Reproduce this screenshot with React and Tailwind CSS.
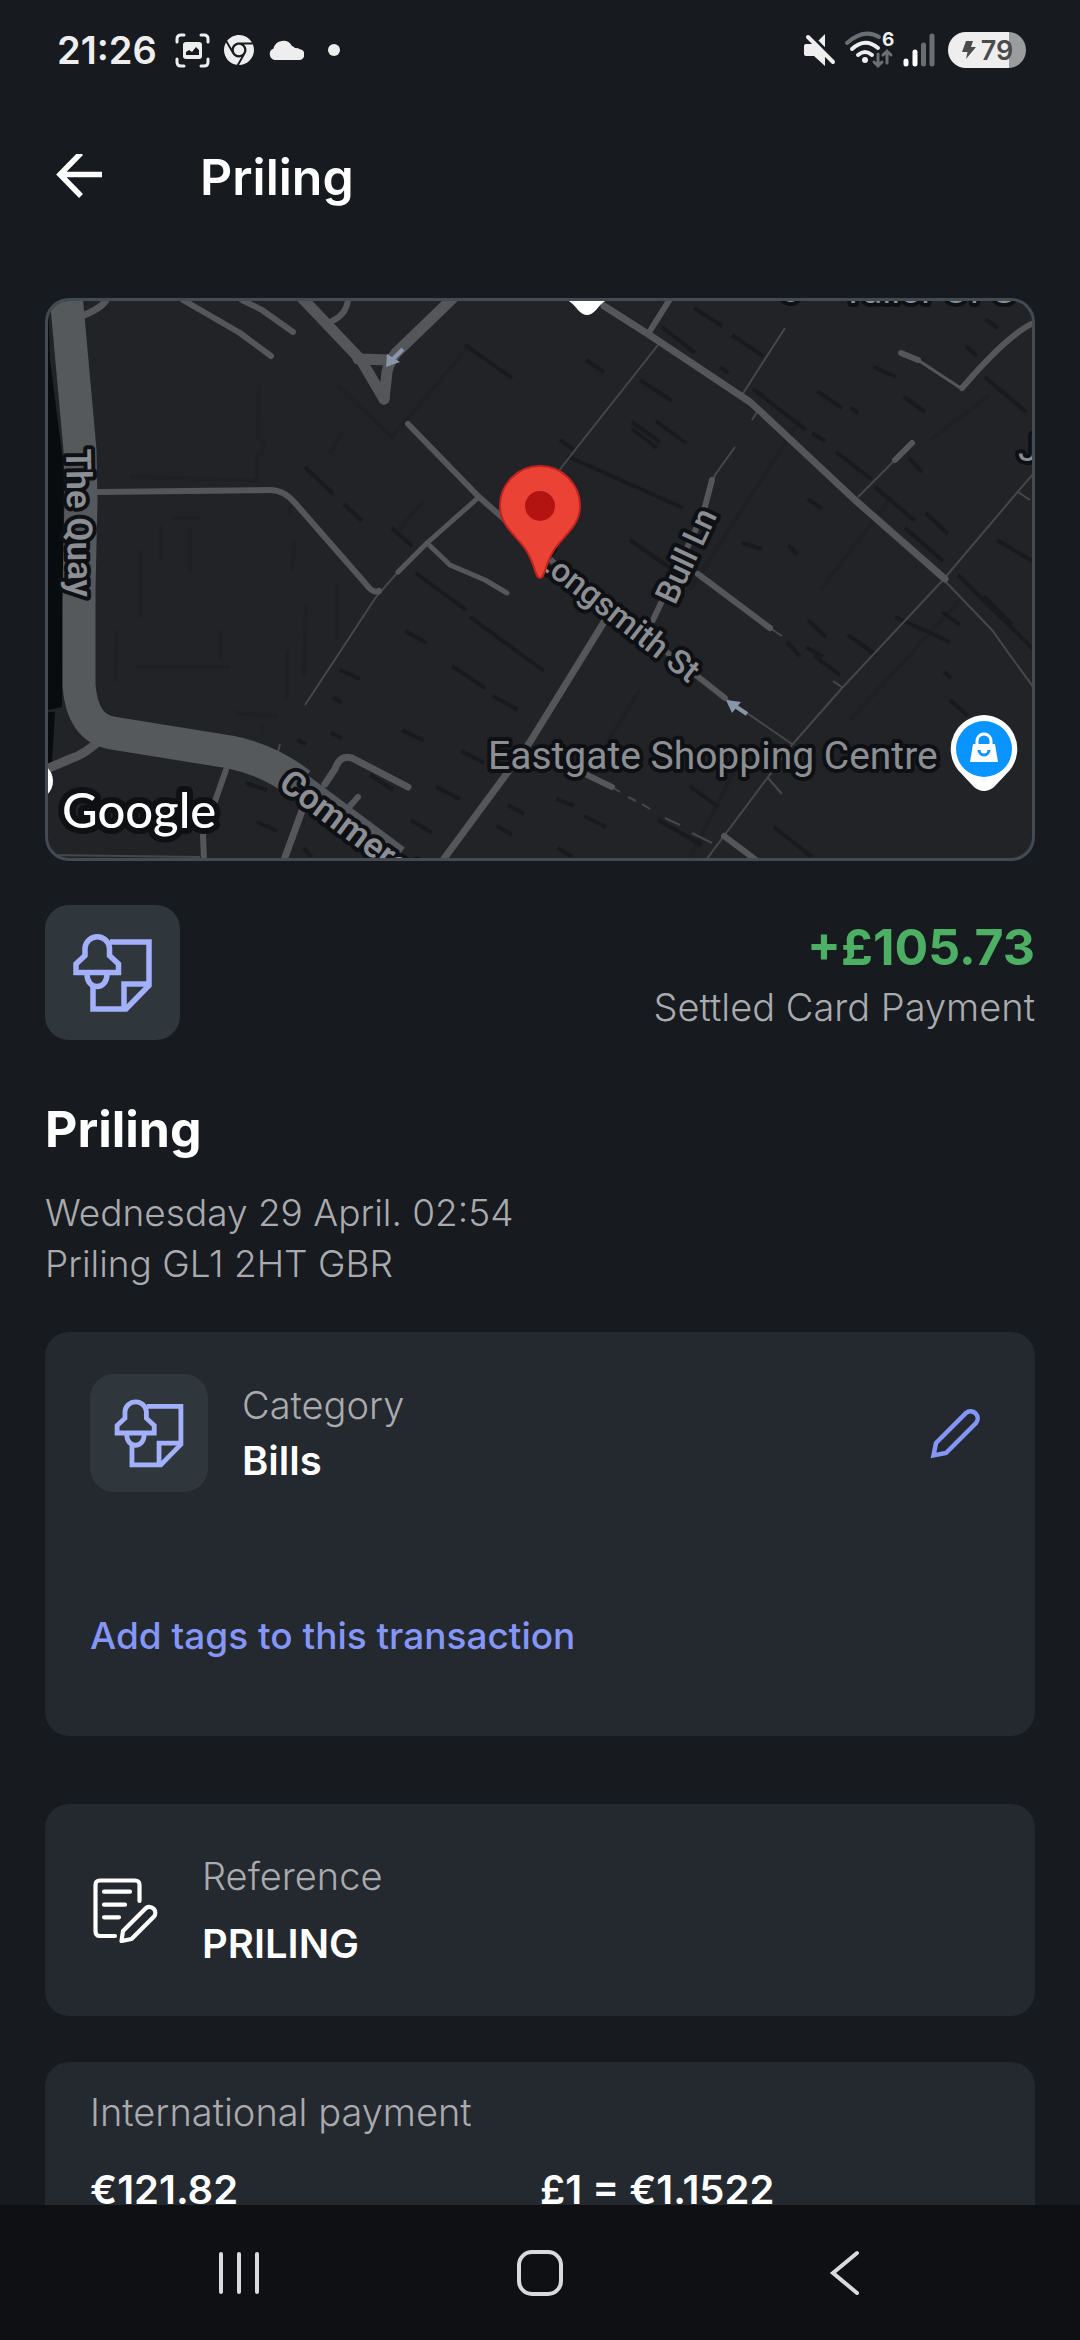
import React from 'react';
import { FaChrome } from 'react-icons/fa6';

const roads = [
  { d: 'M82 316Q102 308 106 300', w: 7 },
  { d: 'M183 300L240 333L271 356', w: 6 },
  { d: 'M242 300L262 310L293 332', w: 6 },
  { d: 'M302 298L361 360L384 399', w: 11 },
  { d: 'M384 399L387 372Q389 362 396 353L455 296', w: 11 },
  { d: 'M358 359L390 360', w: 11 },
  { d: 'M332 321Q346 315 348 300', w: 6 },
  { d: 'M98 492L270 490Q284 490 295 503L365 583Q373 594 379 591', w: 6 },
  { d: 'M408 424L479 497L560 568L725 698', w: 6 },
  { d: 'M479 497L427 543L398 572', w: 5 },
  { d: 'M427 543L450 565L485 580L507 593', w: 5 },
  { d: 'M604 306L648 334L750 402L760 411L855 500L945 579', w: 7 },
  { d: 'M648 334L670 299', w: 6 },
  { d: 'M712 480L703 514L653 620', w: 6 },
  { d: 'M604 622L530 742L443 860', w: 7 },
  { d: 'M901 353L918 360', w: 6 },
  { d: 'M918 360L962 389', w: 3 },
  { d: 'M962 388Q1010 332 1036 322', w: 6 },
  { d: 'M895 460L912 443', w: 6 },
  { d: 'M698 574L770 628', w: 6 },
  { d: 'M585 774L612 787', w: 6 },
  { d: 'M724 836L756 860', w: 6 },
  { d: 'M226 770L203 835L204 860', w: 6 },
  { d: 'M303 808L284 860', w: 7 },
  { d: 'M325 784L335 769Q340 754 352 758L408 787', w: 7 },
  { d: 'M350 806L358 797', w: 6 },
  { d: 'M44 770L70 759Q84 755 100 740', w: 9 },
];

const lanes =
  'M398 572L376 597L305 705M658 345L575 450L558 472M785 328L742 395M757 412L752 420M735 447L715 475L712 482' +
  'M858 497L895 460M1034 473L1015 495L943 580L842 688L792 745L706 860M1018 492L1030 500M944 580L992 630L1012 658L1034 688' +
  'M725 698L792 744M843 688L833 681M770 628L782 636M612 787L620 792M628 797L636 801M642 804L650 809M665 818L680 825M692 833L712 843' +
  'M768 778L782 794M278 752L280 744M48 855L200 857';

// building outlines, barely lighter or darker than the ground
const shadows =
  'M465 345L512 378M305 467L333 494M344 504L362 521M392 528L412 546M567 456L683 508M632 422L660 442M586 360L604 372M694 308L722 326' +
  'M640 380L672 401M656 421L686 443M632 429L657 448M662 327L695 353M732 335L763 356M753 389L806 430M812 433L825 441' +
  'M720 367L728 373M836 452L871 479M875 487L915 521M905 528L943 561M874 367L896 377M904 397L925 412M966 346L977 356M985 319L998 328' +
  'M926 513L948 534M851 408L858 413M817 391L842 408M909 458L922 472M808 499L822 509M985 377L1026 412M997 540L1034 562M895 617L950 642' +
  'M958 575L1034 650M984 596L1012 625M942 612L960 625M808 620L826 637M814 656L840 675M787 642L800 656M742 543L762 549M630 540L690 582' +
  'M806 647L823 657M788 545L797 554M560 440L574 450M416 573L466 610M470 617L544 671M452 666L485 688M493 696L518 710M405 631L427 643' +
  'M340 670L360 679M333 697L342 703M297 740L306 744M331 733L342 738M402 730L424 741M461 751L484 763M246 783L267 790M257 822L277 831' +
  'M436 787L460 799M411 820L432 833M370 775L393 790M508 805L524 814M497 826L512 835M556 799L574 806M584 816L606 827M658 820L702 845' +
  'M558 848L572 857M690 786L718 807M774 827L812 857M848 635L876 655M950 700L968 716M944 672L951 678M303 848L312 857';

const blocks =
  'M259 385L258 438L264 443L262 453L257 455V480L130 477M161 526V560M190 528V574M141 550V618M117 630L115 682M221 630V660M295 540L292 570' +
  'M306 605L304 676M337 585V640M136 667H230M234 713L278 716M262 725V735M330 454L342 432M470 345L392 437L337 385' +
  'M424 500L399 530M287 650V700M172 518H200M290 516V505M890 500L820 590M740 760L690 858M800 420L690 590M640 690L590 770M960 600L850 720M990 395L930 440';

const MapLabel = ({ x, y, size, angle = 0, weight = 500, children }) => (
  <text
    x={x}
    y={y}
    transform={`rotate(${angle} ${x} ${y})`}
    fontSize={size}
    fontWeight={weight}
    fill="#8b8e93"
    stroke="#0e1013"
    strokeWidth="8"
    strokeLinejoin="round"
    paintOrder="stroke"
  >
    {children}
  </text>
);

const TransactionMap = () => (
  <div className="overflow-hidden rounded-3xl border-3 border-[#434a54] bg-[#222327]">
    <svg
      viewBox="48 301 984 557"
      className="block w-full"
      style={{ fontFamily: 'Roboto, sans-serif' }}
      role="img"
      aria-label="Map of the merchant location"
    >
      <path d="M48 301L50 360L64 470L62 707L48 710ZM48 712H55L52 762L48 764Z" fill="#090c0f" />
      <g fill="none">
        <path d={blocks} stroke="#1e2023" strokeWidth="4" />
        <path d={shadows} stroke="#191a1d" strokeWidth="4" />
        <path d={lanes} stroke="#45474b" strokeWidth="2" />
        <g strokeLinecap="round" strokeLinejoin="round" stroke="#545659">
          {roads.map((road) => (
            <path key={road.d} d={road.d} strokeWidth={road.w} />
          ))}
        </g>
        <path d="M290 772L400 854" stroke="#545659" strokeWidth="16" />
        <path
          d="M66 295L80 450L81 500L79 590V685Q82 728 112 733L230 752Q270 760 300 784"
          stroke="#56595b"
          strokeWidth="33"
        />
      </g>
      <g fill="#8796a8" stroke="#8796a8" strokeWidth="4">
        <path d="M386 367L387 354L400 362Z" strokeWidth="0" />
        <path d="M392 360L403 349" />
        <path d="M726 700L741 702L732 713Z" strokeWidth="0" />
        <path d="M735 706L747 714" />
      </g>
      <circle cx="34" cy="781" r="19" fill="#fff" />
      <path d="M566 299H608Q600 304 596 310Q587 320 578 310Q574 304 566 299Z" fill="#fff" />

      <MapLabel x={66} y={449} size={35} angle={89} weight={600}>The Quay</MapLabel>
      <MapLabel x={277} y={787} size={35} angle={37} weight={600}>Commercial Rd</MapLabel>
      <MapLabel x={675} y={606} size={33} angle={-65}>Bull Ln</MapLabel>
      <MapLabel x={534} y={563} size={33} angle={38}>Longsmith St</MapLabel>
      <MapLabel x={488} y={769} size={39} weight={400}>Eastgate Shopping Centre</MapLabel>
      <MapLabel x={842} y={303} size={37} weight={400}>Tailor Of G</MapLabel>
      <MapLabel x={780} y={302} size={37} weight={400}>o</MapLabel>
      <MapLabel x={1018} y={461} size={37} weight={400}>Ju</MapLabel>
      <text
        x="62"
        y="828"
        fontSize="49"
        fontWeight="500"
        fill="#fff"
        stroke="#0e1013"
        strokeWidth="12"
        strokeLinejoin="round"
        paintOrder="stroke"
        style={{ fontFamily: 'Lato, sans-serif' }}
      >
        Google
      </text>

      <path
        d="M540 578C535 578 536 566 526 550C516 535 500 526 500 506A40 40 0 0 1 580 506C580 526 564 535 554 550C544 566 545 578 540 578Z"
        fill="#ea4335"
        stroke="#c5221f"
        strokeWidth="2"
      />
      <circle cx="540" cy="506" r="15" fill="#b31412" />

      <path d="M984 715A34 34 0 0 1 1010 770L994 787Q984 795 974 787L958 770A34 34 0 0 1 984 715Z" fill="#fff" />
      <circle cx="984" cy="749" r="28" fill="#0a94ff" />
      <path d="M973 744H995L998 762H970Z" fill="#fff" />
      <path d="M977 745V741A7 7 0 0 1 991 741V745" fill="none" stroke="#fff" strokeWidth="3" />
      <path d="M979 750A5 5 0 0 0 989 750" fill="none" stroke="#0a94ff" strokeWidth="3" />
    </svg>
  </div>
);

const BillsIcon = ({ className }) => (
  <div className={`shrink-0 rounded-3xl bg-[#2f373d] ${className}`}>
    <svg viewBox="0 0 135 135" className="h-full w-full" fill="none" stroke="#a3b0fb" strokeWidth="5.5">
      <path d="M65 37H104V80.500L81 104H48V80" />
      <path d="M104 79H79V104" />
      <path d="M31 67.500V59L40 50.500V43A12.300 12.300 0 0 1 64.500 43V50.500L73.500 59V67.500Z" />
      <path d="M42 69C42 77 46.500 81.500 52 81.500S62 77 62 69" />
    </svg>
  </div>
);

const PencilIcon = () => (
  <svg viewBox="0 0 52 52" className="h-[52px] w-[52px]" fill="none" stroke="#8497f8" strokeWidth="4.500">
    <path d="M3.500 48.500L6 36L36 6A7.100 7.100 0 0 1 46 16L16 46Z" />
  </svg>
);

const ReferenceIcon = () => (
  <svg
    viewBox="0 0 66 66"
    className="h-[66px] w-[66px] shrink-0"
    fill="none"
    stroke="#fff"
    strokeWidth="4.200"
    strokeLinecap="round"
    strokeLinejoin="round"
  >
    <path d="M46.500 24V8Q46.500 3.500 42 3.500H7Q2.500 3.500 2.500 8V54Q2.500 59 7 59H22" />
    <path d="M11 14.700H37M11 27.700H32M11 40.300H26" />
    <path d="M28.500 64L30 54L53 31A5.900 5.900 0 0 1 61 39.500L38.500 62Z" />
  </svg>
);

const StatusBar = () => (
  <div className="flex h-[100px] shrink-0 items-center justify-between pr-[54px] pl-[57px]">
    <div className="flex items-center text-[#eeeeee]">
      <span className="w-[118px] text-[38px] leading-none font-semibold">21:26</span>
      <svg viewBox="0 0 35 35" className="mr-[14px] h-[35px] w-[35px]">
        <path
          d="M2 9V6Q2 2 6 2H9M26 2H29Q33 2 33 6V9M33 26V29Q33 33 29 33H26M9 33H6Q2 33 2 29V26"
          fill="none"
          stroke="currentColor"
          strokeWidth="3"
          strokeLinecap="round"
        />
        <rect x="8" y="9" width="19" height="17" rx="3" fill="currentColor" />
        <path d="M11 22V19L14 17L17 19L21 14L24 17V22Z" fill="#171a1f" />
      </svg>
      <FaChrome className="mr-[14px] h-[30px] w-[30px]" />
      <svg viewBox="0 0 36 22" className="mr-6 h-[22px] w-9">
        <path
          d="M7 21A6 6 0 0 1 5.500 9.500A10 10 0 0 1 24 7A9 9 0 0 1 27 9Q31 9 31 10A5.500 5.500 0 0 1 31 21Z"
          fill="currentColor"
        />
      </svg>
      <span className="h-3 w-3 rounded-full bg-[#eeeeee]" />
    </div>

    <div className="flex items-center">
      <svg viewBox="0 0 34 34" className="mr-2 h-[34px] w-[34px]">
        <path d="M3 11H10L22 23V33L11 23H3Q1 23 1 21V13Q1 11 3 11ZM15 8L22 1V15Z" fill="#eee" />
        <path d="M7 2L33 28" stroke="#171a1f" strokeWidth="4" />
        <path d="M5 4L30 29" stroke="#eee" strokeWidth="4" strokeLinecap="round" />
      </svg>
      <svg
        viewBox="0 0 50 36"
        className="mr-2 h-9 w-[50px] overflow-visible"
        fill="none"
        strokeWidth="4"
        strokeLinecap="round"
      >
        <path d="M2 11Q19 -4 34 5" stroke="#6b6e72" />
        <path d="M7 17Q20 5 33 16" stroke="#eee" />
        <path d="M13 23Q20 17 27 23" stroke="#eee" />
        <circle cx="20" cy="28" r="3" fill="#eee" />
        <path d="M33 22V34M29 30L33 34L37 30M42 31V19M38 23L42 19L46 23" stroke="#6b6e72" strokeWidth="3" />
        <text x="37" y="14" fontSize="19" fontWeight="700" fill="#eee" style={{ fontFamily: 'Inter, sans-serif' }}>
          6
        </text>
      </svg>
      <svg viewBox="0 0 32 34" className="mr-[13px] h-[34px] w-8" strokeWidth="5" strokeLinecap="round">
        <path d="M3 28V31M12 19V31" stroke="#fff" />
        <path d="M20.500 12V31M29 3V31" stroke="#6b6e72" />
      </svg>
      <div className="flex h-9 w-[78px] items-center justify-center gap-1 rounded-full bg-linear-to-r from-[#eeeeee] from-78% to-[#9b9c9e] to-78% text-[#4b4b4b]">
        <svg viewBox="0 0 16 20" className="h-5 w-4" fill="currentColor">
          <path d="M5 1H12L10 7H15L5 19L6.500 12H1Z" />
        </svg>
        <span className="text-[27px] leading-none font-semibold">79</span>
      </div>
    </div>
  </div>
);

const Header = () => (
  <header className="flex h-[154px] shrink-0 items-center gap-[98px] px-14">
    <button type="button" aria-label="Back">
      <svg viewBox="0 0 46 46" className="h-[46px] w-[46px]" fill="none" stroke="#fff" strokeWidth="5.500">
        <path d="M46 20.500H4M25 -1L4 20.500L25 42" className="overflow-visible" />
      </svg>
    </button>
    <h1 className="text-[50px] leading-[60px] font-semibold">Priling</h1>
  </header>
);

const NavBar = () => (
  <nav className="flex h-[135px] shrink-0 items-center justify-between bg-[#0e1013] px-[216px]">
    <button type="button" aria-label="Recent apps">
      <svg viewBox="0 0 46 46" className="h-[46px] w-[46px]" stroke="#d9dadb" strokeWidth="4" strokeLinecap="round">
        <path d="M5 4V42M23 4V42M41 4V42" />
      </svg>
    </button>
    <button type="button" aria-label="Home">
      <svg viewBox="0 0 46 46" className="h-[46px] w-[46px]" fill="none" stroke="#d9dadb" strokeWidth="4">
        <rect x="2" y="2" width="42" height="42" rx="13" />
      </svg>
    </button>
    <button type="button" aria-label="Back">
      <svg
        viewBox="0 0 46 46"
        className="h-[46px] w-[46px]"
        fill="none"
        stroke="#d9dadb"
        strokeWidth="4"
        strokeLinecap="round"
      >
        <path d="M39 3L15 23L39 43" />
      </svg>
    </button>
  </nav>
);

const App = () => {
  return (
    <div className="flex h-screen flex-col bg-[#171a1f] font-[Inter,sans-serif] text-white">
      <StatusBar />
      <Header />

      <main className="min-h-0 flex-1 overflow-y-auto px-[45px] pt-11 [scrollbar-width:none]">
        <TransactionMap />

        <section className="mt-11 flex items-center justify-between">
          <BillsIcon className="h-[135px] w-[135px]" />
          <div className="pt-2 text-right">
            <p className="text-[50px] leading-[60px] font-bold text-[#4caf64]">+£105.73</p>
            <p className="text-[38px] leading-[60px] font-light text-[#a9abae]">Settled Card Payment</p>
          </div>
        </section>

        <h2 className="mt-[59px] text-[50px] leading-[60px] font-bold">Priling</h2>
        <div className="mt-7 text-[37px] leading-[51px] font-light text-[#a9abae]">
          <p>Wednesday 29 April. 02:54</p>
          <p>Priling GL1 2HT GBR</p>
        </div>

        <section className="mt-[43px] rounded-3xl bg-[#24282f] px-[45px] pt-[42px] pb-[72px]">
          <div className="flex items-center">
            <BillsIcon className="h-[118px] w-[118px]" />
            <div className="ml-[34px] flex-1">
              <p className="text-[38px] leading-[56px] font-light text-[#a9abae]">Category</p>
              <p className="text-[40px] leading-[56px] font-semibold">Bills</p>
            </div>
            <button type="button" aria-label="Edit category" className="mr-2">
              <PencilIcon />
            </button>
          </div>
          <button type="button" className="mt-[116px] text-[37px] leading-[56px] font-medium text-[#8497f8]">
            Add tags to this transaction
          </button>
        </section>

        <section className="mt-[68px] flex h-[212px] items-center gap-[43px] rounded-3xl bg-[#24282f] px-12">
          <ReferenceIcon />
          <div>
            <p className="text-[38px] leading-[68px] font-light text-[#a9abae]">Reference</p>
            <p className="text-[40px] leading-[68px] font-semibold">PRILING</p>
          </div>
        </section>

        <section className="mt-[46px] rounded-3xl bg-[#24282f] px-[45px] pt-[22px] pb-11">
          <h3 className="text-[38px] leading-[56px] font-light text-[#a9abae]">International payment</h3>
          <div className="mt-[22px] grid grid-cols-2 text-[40px] leading-[56px] font-semibold">
            <p>€121.82</p>
            <p>£1 = €1.1522</p>
          </div>
        </section>
      </main>

      <NavBar />
    </div>
  );
};

export default App;
